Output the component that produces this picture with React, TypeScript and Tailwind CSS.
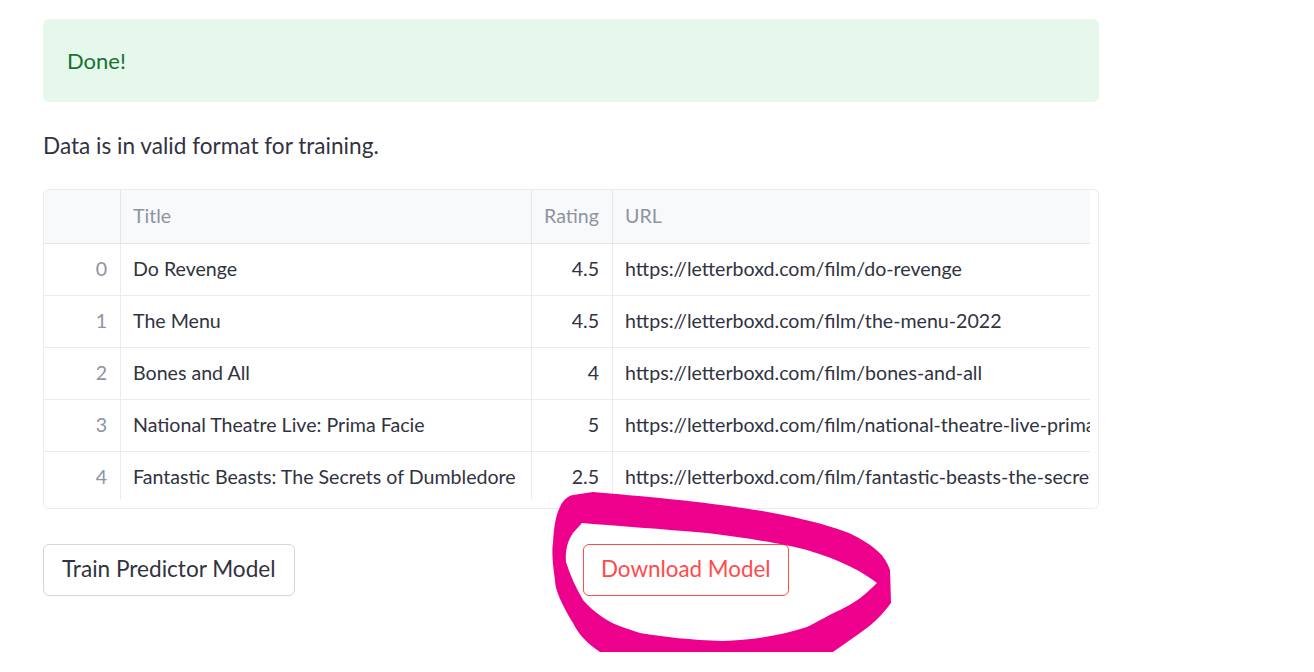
import React from "react";

const rows = [
  { i: 0, title: "Do Revenge", rating: "4.5", url: "https://letterboxd.com/film/do-revenge" },
  { i: 1, title: "The Menu", rating: "4.5", url: "https://letterboxd.com/film/the-menu-2022" },
  { i: 2, title: "Bones and All", rating: "4", url: "https://letterboxd.com/film/bones-and-all" },
  { i: 3, title: "National Theatre Live: Prima Facie", rating: "5", url: "https://letterboxd.com/film/national-theatre-live-prima-facie" },
  { i: 4, title: "Fantastic Beasts: The Secrets of Dumbledore", rating: "2.5", url: "https://letterboxd.com/film/fantastic-beasts-the-secrets-of-dumbledore" },
];

function Row({ r, last }: { r: (typeof rows)[number]; last?: boolean }) {
  return (
    <div className={`flex h-[52px] shrink-0 ${last ? "" : "border-b border-[#ebebee]"}`}>
      <div className="w-[77px] shrink-0 border-r border-[#ebebee] flex items-center justify-end pr-[13px] pb-[2px] text-[#8f93a2]">{r.i}</div>
      <div className="w-[411px] shrink-0 border-r border-[#ebebee] flex items-center pl-[12px] pb-[2px] whitespace-nowrap">{r.title}</div>
      <div className="w-[81px] shrink-0 border-r border-[#ebebee] flex items-center justify-end pr-[13px] pb-[2px]">{r.rating}</div>
      <div className="w-[600px] shrink-0 flex items-center pl-[12px] pb-[2px] whitespace-nowrap">{r.url}</div>
    </div>
  );
}

export default function App() {
  return (
    <div className="relative w-[1314px] h-[672px] bg-white overflow-hidden" style={{ fontFamily: '"Source Sans Pro", Lato, "Noto Sans", sans-serif' }}>
      <div className="w-[1056px] ml-[43px] pt-[19px] flex flex-col">
        <div className="h-[83px] rounded-[6px] bg-[#e6f8ec] flex items-center px-[24px] pb-[1px] text-[22px] text-[#177233]">Done!</div>
        <p className="mt-[28px] text-[22.6px] text-[#31333f] leading-[32px]">Data is in valid format for training.</p>
        <div className="mt-[27px] h-[320px] border border-[#ebebee] rounded-[6px] pr-[8px] pb-[9px] overflow-hidden">
          <div className="h-[309px] overflow-hidden flex flex-col text-[19.6px] text-[#31333f]">
            <div className="flex h-[54px] shrink-0 bg-[#f8f9fb] border-b border-[#e4e5e9] text-[#8f93a2]">
              <div className="w-[77px] shrink-0 border-r border-[#e4e5e9]"></div>
              <div className="w-[411px] shrink-0 border-r border-[#e4e5e9] flex items-center pl-[12px] pb-[2px]">Title</div>
              <div className="w-[81px] shrink-0 border-r border-[#e4e5e9] flex items-center justify-end pr-[13px] pb-[2px]">Rating</div>
              <div className="flex-1 flex items-center pl-[12px] pb-[2px]">URL</div>
            </div>
            {rows.map((r, k) => (
              <Row key={r.i} r={r} last={k === rows.length - 1} />
            ))}
          </div>
        </div>
        <div className="mt-[35px] grid grid-cols-2 gap-[24px]">
          <div>
            <button className="h-[52px] px-[18px] pb-[2px] rounded-[6px] border border-[#d6d6d9] bg-white text-[22.6px] text-[#31333f]">Train Predictor Model</button>
          </div>
          <div>
            <button className="h-[52px] px-[17px] pb-[2px] rounded-[6px] border border-[#ff4b4b] bg-white text-[22.4px] text-[#ff4b4b]">Download Model</button>
          </div>
        </div>
      </div>
      <svg className="absolute left-0 top-0 pointer-events-none" width="1314" height="672" viewBox="0 0 1314 672">
        <path
          fillRule="evenodd"
          fill="#ec008c"
          d="M593 492 C640 496 720 503 773 513 C815 521 845 530 857 537 C875 547 885 555 890 570 L891 603 C880 618 870 626 860 633 L833 652 L600 652 C585 642 578 633 573 623 C562 605 555 590 555 580 C552 560 552 548 553 543 C554 525 556 515 560 507 C563 500 568 496 573 495 Z M582 523 C620 526 660 529 707 533 C740 537 780 543 807 550 C840 560 860 570 877 583 C865 595 855 603 840 610 C825 617 815 623 807 627 C780 636 750 640 723 641 C690 640 665 637 640 633 C625 628 615 625 607 620 C596 613 589 607 583 600 C576 588 570 575 566 562 C565 550 568 540 573 533 Z"
        />
      </svg>
    </div>
  );
}
